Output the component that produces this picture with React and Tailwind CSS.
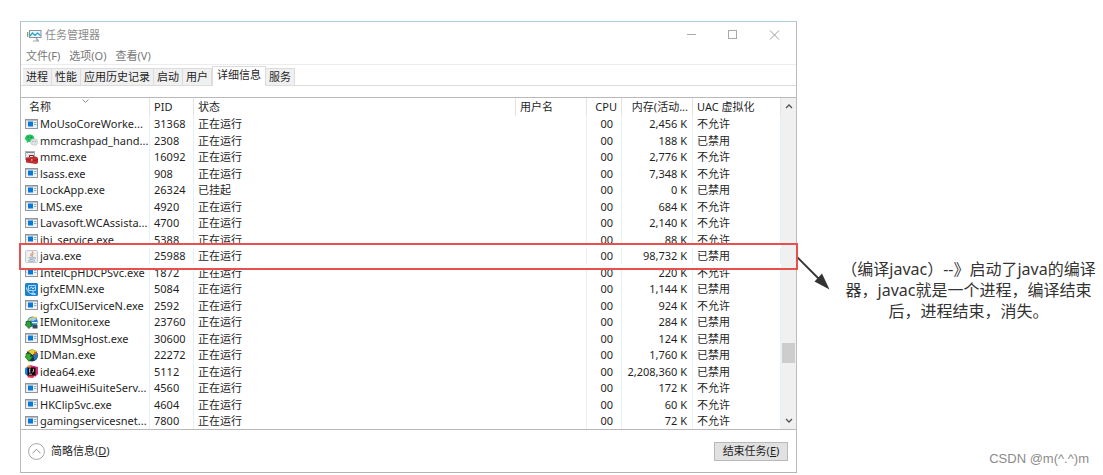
import React from "react";

const UI_FONT = "font-['Noto_Sans','Noto_Sans_CJK_SC',sans-serif]";

const PROCESSES = [
  ["app", "MoUsoCoreWorke...", "31368", "正在运行", "2,456 K", "不允许"],
  ["wechat", "mmcrashpad_hand...", "2308", "正在运行", "188 K", "已禁用"],
  ["toolbox", "mmc.exe", "16092", "正在运行", "2,776 K", "不允许"],
  ["app", "lsass.exe", "908", "正在运行", "7,348 K", "不允许"],
  ["app", "LockApp.exe", "26324", "已挂起", "0 K", "已禁用"],
  ["app", "LMS.exe", "4920", "正在运行", "684 K", "不允许"],
  ["app", "Lavasoft.WCAssista...", "4700", "正在运行", "2,140 K", "不允许"],
  ["app", "jhi_service.exe", "5388", "正在运行", "88 K", "不允许"],
  ["java", "java.exe", "25988", "正在运行", "98,732 K", "已禁用"],
  ["app", "IntelCpHDCPSvc.exe", "1872", "正在运行", "220 K", "不允许"],
  ["intel", "igfxEMN.exe", "5084", "正在运行", "1,144 K", "已禁用"],
  ["app", "igfxCUIServiceN.exe", "2592", "正在运行", "924 K", "不允许"],
  ["monitor", "IEMonitor.exe", "23760", "正在运行", "284 K", "已禁用"],
  ["app", "IDMMsgHost.exe", "30600", "正在运行", "124 K", "已禁用"],
  ["idm", "IDMan.exe", "22272", "正在运行", "1,760 K", "已禁用"],
  ["idea", "idea64.exe", "5112", "正在运行", "2,208,360 K", "已禁用"],
  ["app", "HuaweiHiSuiteServ...", "4560", "正在运行", "172 K", "不允许"],
  ["app", "HKClipSvc.exe", "4604", "正在运行", "60 K", "不允许"],
  ["app", "gamingservicesnet...", "7800", "正在运行", "72 K", "不允许"],
];

const TABS = ["进程", "性能", "应用历史记录", "启动", "用户", "详细信息", "服务"];

const ICONS = {
  app: (
    <>
      <rect x="0.5" y="1.5" width="12" height="9" fill="#f1f1f1" stroke="#8f969b" />
      <path d="M1 2.5h11" stroke="#b9bfc4" />
      <rect x="3" y="3.5" width="5" height="5" fill="#0a78d6" />
      <path d="M9 4.5h2.4M9 6.5h2.4" stroke="#7fb2de" />
      <path d="M1.3 4.5h1M1.3 6.5h1" stroke="#c5ccd2" />
    </>
  ),
  wechat: (
    <>
      <ellipse cx="4.700" cy="4.200" rx="4.600" ry="3.700" fill="#22c35e" />
      <path d="M2 6.500 1.600 9l3-1.500z" fill="#22c35e" />
      <ellipse cx="9.200" cy="8" rx="3.800" ry="3.200" fill="#dfe3e1" stroke="#b9c1bc" strokeWidth="0.5" />
      <path d="m11 10.500 1 1.700-2.500-1.200z" fill="#dfe3e1" />
      <circle cx="3.300" cy="3.200" r="0.6" fill="#157a3c" />
      <circle cx="6.300" cy="3.200" r="0.6" fill="#157a3c" />
      <circle cx="8" cy="7.400" r="0.5" fill="#7b857f" />
      <circle cx="10.400" cy="7.400" r="0.5" fill="#7b857f" />
    </>
  ),
  toolbox: (
    <>
      <rect x="0.5" y="0.5" width="9" height="8" fill="#e3e7ea" stroke="#aab1b6" />
      <path d="M1 1.500h8" stroke="#7e8990" />
      <path d="M4.500 6V4.500h4V6" fill="none" stroke="#7c1d1d" />
      <path d="M1 6.500 11 5.500l2 1.500v5l-2 1-10-1.500z" fill="#c62d2f" />
      <path d="M1 8.700 11 9.400l2-1" stroke="#8d1b1e" strokeWidth="0.8" fill="none" />
      <rect x="6" y="8.200" width="1.500" height="1.500" fill="#e9b9b9" />
    </>
  ),
  java: (
    <>
      <rect x="0.5" y="0.5" width="12" height="12" rx="1" fill="#eceef0" stroke="#c3c8cc" />
      <path d="M7.300 1.500c1.500 1.700-2.800 2.400-1 5M8.600 3.600c-1.600.8-1.800 1.500-1 3" stroke="#d9743f" fill="none" strokeWidth="1" />
      <path d="M3.600 7.500c1.800.7 4 .6 5.600 0M4.300 9.100c1.400.5 3 .5 4.400 0M3 10.700c2.300.8 5.400.7 7 0M9.500 7.600c1.600-.2 1.200 1.200-.2 1.500" stroke="#7791aa" fill="none" strokeWidth="0.8" />
    </>
  ),
  intel: (
    <>
      <rect x="0" y="0" width="13" height="13" rx="1.500" fill="#1b82d0" />
      <path d="M3.500 2.500h7v5h-7zM6 10.500h4.500M8 8v2" stroke="#a9d8f6" fill="none" />
      <path d="M1.500 4.500c.5 4.500 4 7 9 7" stroke="#d4ecfb" fill="none" />
      <path d="M4.500 5.800 6.500 4l1.500 2 1.500-2" stroke="#fff" fill="none" strokeWidth="0.8" />
    </>
  ),
  monitor: (
    <>
      <circle cx="7.500" cy="5.800" r="5.300" fill="#2b84c9" />
      <path d="M3 4c2.500-3.500 7-3.500 8.500-.5L8 5z" fill="#9ed3f2" />
      <path d="M2.500 7.500C4 3 9 .5 12.300 1.500" stroke="#f0c22c" strokeWidth="1.200" fill="none" />
      <path d="M7 6h5.500v1.300H7z" fill="#e6f3fb" />
      <path d="M1 5.500h4.500V8h2L4 12.600 0 8.500h1z" fill="#2fa235" stroke="#14551b" strokeWidth="0.7" />
      <path d="M8 9h4.500v3.500H7.500z" fill="#3d4a54" />
    </>
  ),
  idm: (
    <>
      <circle cx="7" cy="6.500" r="5.900" fill="#1d3342" />
      <path d="M3 2.500C5.500 0 10 .3 11.800 3L7.500 6z" fill="#e9d02e" />
      <path d="M8 6.200 12.300 4c1 3-.3 6-2.600 7.500z" fill="#2176bd" />
      <path d="M9 2.500c1.800.3 2.500 1.500 2.800 2.800L9.500 6z" fill="#dd5424" />
      <path d="M1 4.500h4.500v3h2.300L4 12.400-.2 7.500H1z" fill="#37ad34" stroke="#176020" strokeWidth="0.6" />
    </>
  ),
  idea: (
    <>
      <path d="M0 3 4 0l4 2z" fill="#f58a23" />
      <path d="M5 0 13 2v7l-3 3z" fill="#d92b72" />
      <path d="M0 3.500 3 2v9.500L0 9z" fill="#1680f0" />
      <path d="M2 9h9l-3 4-5-.5z" fill="#ee3152" />
      <rect x="2.500" y="2.500" width="8" height="8" fill="#0d0508" />
      <path d="M4 4h1.500M4.700 4v3M4 7h1.500M8.500 3.800v2.500q0 .9-1.300.7" stroke="#fff" fill="none" strokeWidth="0.7" />
      <path d="M4 9.200h3" stroke="#fff" strokeWidth="0.7" />
    </>
  ),
};

function ProcessIcon({ name }) {
  return (
    <svg className="h-[13px] w-[13px] shrink-0" viewBox="0 0 13 13" aria-hidden="true">
      {ICONS[name]}
    </svg>
  );
}

function TitleBar() {
  return (
    <header className="flex h-[26px] items-center pl-[6px] text-[11px] text-[#8c8c8c]">
      <svg className="mr-[3px] h-[13px] w-[15px]" viewBox="0 0 15 13" aria-hidden="true">
        <rect x="2.500" y="1.500" width="11.500" height="7" fill="#e6f6fd" stroke="#8a9299" />
        <path d="M3 7 5.500 4 8 6.500l2.500-2.500L13.500 6.500" fill="none" stroke="#2a9ed0" strokeWidth="1.200" />
        <path d="m9 9 2.500 3M6 12h6" stroke="#9aa2a8" strokeWidth="1.200" />
        <path d="M.7 3v5" stroke="#6fa36a" strokeWidth="1.200" />
      </svg>
      <h1>任务管理器</h1>
      <div className="ml-auto flex h-full">
        <button aria-label="最小化" className="flex w-[41px] items-center justify-center">
          <svg className="h-[11px] w-[11px]" viewBox="0 0 11 11"><path d="M1 4.500h9" stroke="#a9a9a9" /></svg>
        </button>
        <button aria-label="最大化" className="flex w-[41px] items-center justify-center">
          <svg className="h-[11px] w-[11px]" viewBox="0 0 11 11"><rect x="1.500" y="0.500" width="8" height="8" fill="none" stroke="#a9a9a9" /></svg>
        </button>
        <button aria-label="关闭" className="flex w-[43px] items-center justify-center">
          <svg className="h-[11px] w-[11px]" viewBox="0 0 11 11"><path d="m1 .5 9 9M10 .5l-9 9" stroke="#9b9b9b" /></svg>
        </button>
      </div>
    </header>
  );
}

function Tabs() {
  return (
    <div role="tablist" className="flex h-[21px] items-end border-b border-[#dcdcdc] pl-[2px] text-[11px] leading-4">
      {TABS.map((tab) =>
        tab === "详细信息" ? (
          <button key={tab} role="tab" aria-selected="true" className="-mb-px h-[20px] border border-b-0 border-[#dcdcdc] bg-white px-1 pb-[3px]">
            {tab}
          </button>
        ) : (
          <button key={tab} role="tab" aria-selected="false" className="h-[17px] border-t border-r border-[#dcdcdc] bg-[#f0f0f0] px-[3px]">
            {tab}
          </button>
        )
      )}
    </div>
  );
}

function ProcessTable() {
  const head = "border-r border-[#e3e3e3] p-0 font-normal whitespace-nowrap";
  const cell = "border-r border-[#e4f0fa] p-0";
  return (
    <table className="w-full table-fixed border-separate border-spacing-0 text-[11px] leading-4">
      <colgroup>
        <col className="w-[129px]" />
        <col className="w-[44px]" />
        <col />
        <col className="w-[71px]" />
        <col className="w-[35px]" />
        <col className="w-[71px]" />
        <col className="w-[88px]" />
      </colgroup>
      <thead>
        <tr className="h-[18px] text-left">
          <th className={`${head} relative pl-2`}>
            名称
            <svg className="absolute top-px left-[61px] h-1 w-[7px]" viewBox="0 0 7 4" aria-hidden="true">
              <path d="m.5.5 3 3 3-3" fill="none" stroke="#8a8a8a" />
            </svg>
          </th>
          <th className={`${head} pl-1`}>PID</th>
          <th className={`${head} pl-1`}>状态</th>
          <th className={`${head} pl-1`}>用户名</th>
          <th className={`${head} pr-1 text-right`}>CPU</th>
          <th className={`${head} pr-1 text-right`}>内存(活动...</th>
          <th className={`${head} pl-1`}>UAC 虚拟化</th>
        </tr>
      </thead>
      <tbody>
        {PROCESSES.map(([icon, name, pid, status, memory, uac]) => (
          <tr key={name} className={`h-4 even:h-[17px] ${icon === "java" ? "relative z-20" : ""}`}>
            <td className={cell}>
              <div className="flex h-4 items-center gap-[2px] pl-1 whitespace-nowrap">
                <ProcessIcon name={icon} />
                {name}
              </div>
            </td>
            <td className={`${cell} pl-1`}>{pid}</td>
            <td className="p-0 pl-1">{status}</td>
            <td className={cell}></td>
            <td className={`${cell} pr-2 text-right`}>00</td>
            <td className={`${cell} pr-[5px] text-right whitespace-nowrap`}>{memory}</td>
            <td className={`${cell} pl-1`}>{uac}</td>
          </tr>
        ))}
      </tbody>
    </table>
  );
}

function ScrollBar() {
  return (
    <div className="relative z-20 flex w-[15px] shrink-0 flex-col bg-[#f0f0f0]">
      <button aria-label="向上滚动" className="flex h-4 items-center justify-center">
        <svg className="h-[6px] w-[8px]" viewBox="0 0 8 6"><path d="m1 5 3-3 3 3" fill="none" stroke="#505050" strokeWidth="1.300" /></svg>
      </button>
      <div className="grow-[230]" />
      <div className="mx-px h-5 bg-[#cdcdcd]" />
      <div className="grow-[50]" />
      <button aria-label="向下滚动" className="flex h-4 items-center justify-center">
        <svg className="h-[6px] w-[8px]" viewBox="0 0 8 6"><path d="m1 1 3 3 3-3" fill="none" stroke="#505050" strokeWidth="1.300" /></svg>
      </button>
    </div>
  );
}

function TaskManager() {
  return (
    <section className={`mt-[21px] min-w-0 flex-1 self-start border border-t-[#a9cfd0] border-r-[#bcbcbc] border-b-[#b5b5b5] border-l-[#bcbcbc] bg-white text-[#1f1f1f] ${UI_FONT}`}>
      <TitleBar />
      <nav className="flex h-[17px] items-center gap-[9px] border-b border-[#ececec] pl-[5px] text-[11px] leading-4 text-[#777]">
        <button>文件(F)</button>
        <button>选项(O)</button>
        <button>查看(V)</button>
      </nav>
      <Tabs />
      <div className="relative mt-[11px] flex border-y border-[#b9b9b9]">
        <div className="min-w-0 flex-1">
          <ProcessTable />
        </div>
        <ScrollBar />
        <div className="pointer-events-none absolute inset-x-0 top-[145px] z-10 h-[27px] bg-white" />
        <div className="pointer-events-none absolute top-[145px] -right-[2px] -left-[2px] z-30 h-[27px] border-2 border-[#e8504e]" />
      </div>
      <footer className="flex h-[42px] items-center pr-2 pl-[7px] text-[11px]">
        <button className="flex items-center gap-[6px]">
          <svg className="h-[17px] w-[17px]" viewBox="0 0 17 17" aria-hidden="true">
            <circle cx="8.500" cy="8.500" r="7.900" fill="none" stroke="#a3a3a3" />
            <path d="m4.500 10.300 4-4 4 4" fill="none" stroke="#8c8c8c" />
          </svg>
          <span>简略信息(<u>D</u>)</span>
        </button>
        <button className="ml-auto h-[19px] w-[74px] border border-[#b9b9b9] bg-[#e1e1e1] leading-4">
          结束任务(<u>E</u>)
        </button>
      </footer>
    </section>
  );
}

function Annotation() {
  return (
    <aside className="flex w-[306px] shrink-0 flex-col justify-between">
      <div className="flex items-start pt-[256px]">
        <svg className="h-[34px] w-[33px] shrink-0" viewBox="0 0 33 34" aria-hidden="true">
          <path d="M0 1 23 24" stroke="#333" strokeWidth="1.800" />
          <path d="M32.500 33.500 17.500 25.500 25 17.500z" fill="#333" />
        </svg>
        <p className="mt-[3px] flex-1 pl-1 text-center font-['Noto_Sans','Noto_Sans_CJK_SC',sans-serif] text-base leading-[21px] whitespace-nowrap text-[#333]">
          （编译javac）--》启动了java的编译
          <br />
          器，javac就是一个进程，编译结束
          <br />
          后，进程结束，消失。
        </p>
      </div>
      <small className="pr-[14px] pb-2 text-right font-['Liberation_Sans',sans-serif] text-[13px] leading-4 text-[#8b8b8b]">
        CSDN @m(^.^)m
      </small>
    </aside>
  );
}

export default function App() {
  return (
    <main className="flex min-h-screen bg-white pl-5">
      <TaskManager />
      <Annotation />
    </main>
  );
}
